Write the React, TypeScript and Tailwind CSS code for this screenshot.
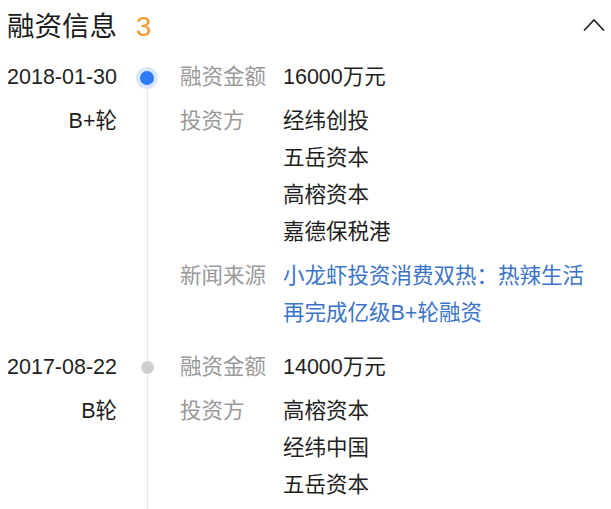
import { ReactNode } from 'react'

interface Row {
  label: string
  values: ReactNode[]
  link?: boolean
}

interface Round {
  date: string
  round: string
  active?: boolean
  rows: Row[]
}

const ROUNDS: Round[] = [
  {
    date: '2018-01-30',
    round: 'B+轮',
    active: true,
    rows: [
      { label: '融资金额', values: ['16000万元'] },
      { label: '投资方', values: ['经纬创投', '五岳资本', '高榕资本', '嘉德保税港'] },
      { label: '新闻来源', values: ['小龙虾投资消费双热：热辣生活', '再完成亿级B+轮融资'], link: true }
    ]
  },
  {
    date: '2017-08-22',
    round: 'B轮',
    rows: [
      { label: '融资金额', values: ['14000万元'] },
      { label: '投资方', values: ['高榕资本', '经纬中国', '五岳资本'] }
    ]
  }
]

const FONT = "font-['Liberation_Sans','Noto_Sans_CJK_SC',sans-serif]"

const RoundItem = ({ item, first }: { item: Round; first: boolean }) => (
  <div className="flex">
    {/* date + round */}
    <div className="w-[110px] ml-[7px] text-right text-[#1f1f1f] leading-[37px]">
      <div>{item.date}</div>
      <div className="mt-[7px]">{item.round}</div>
    </div>

    {/* timeline */}
    <div className="w-[60px] flex flex-col items-center">
      <div className={`w-px h-[12px] ${first ? '' : 'bg-[#e6e6e6]'}`} />
      {item.active ? (
        <div className="w-[14px] h-[14px] rounded-full bg-[#2f7df6] ring-4 ring-[#d9e7fc]" />
      ) : (
        <div className="w-[13px] h-[13px] rounded-full bg-[#cfcfcf]" />
      )}
      <div className="w-px flex-1 bg-[#e6e6e6]" />
    </div>

    {/* details */}
    <div className="flex flex-col gap-[7px] leading-[37px] pb-[17px]">
      {item.rows.map((r) => (
        <div key={r.label} className="flex">
          <div className="w-[106px] pl-[3px] text-[#999]">{r.label}</div>
          <div className={r.link ? 'text-[#3b74c8]' : 'text-[#1f1f1f]'}>
            {r.values.map((v, i) => (
              <div key={i}>{v}</div>
            ))}
          </div>
        </div>
      ))}
    </div>
  </div>
)

export default function App() {
  return (
    <div className={`w-[611px] h-[509px] overflow-hidden bg-white ${FONT} text-[21.5px]`}>
      <div className="h-[54px] flex items-center justify-between pl-[7px] pr-[6px]">
        <div className="flex items-center text-[27.5px] text-[#1a1a1a]">
          <span>融资信息</span>
          <span className="ml-[19px] text-[#f09b2c]">3</span>
        </div>
        <svg width="22" height="14" viewBox="0 0 22 14" fill="none" className="mb-[4px]">
          <polyline points="1,12.5 11,2 21,12.5" stroke="#222" strokeWidth="1.7" />
        </svg>
      </div>
      <div className="pt-[5px]">
        {ROUNDS.map((r, i) => (
          <RoundItem key={r.date} item={r} first={i === 0} />
        ))}
      </div>
    </div>
  )
}
